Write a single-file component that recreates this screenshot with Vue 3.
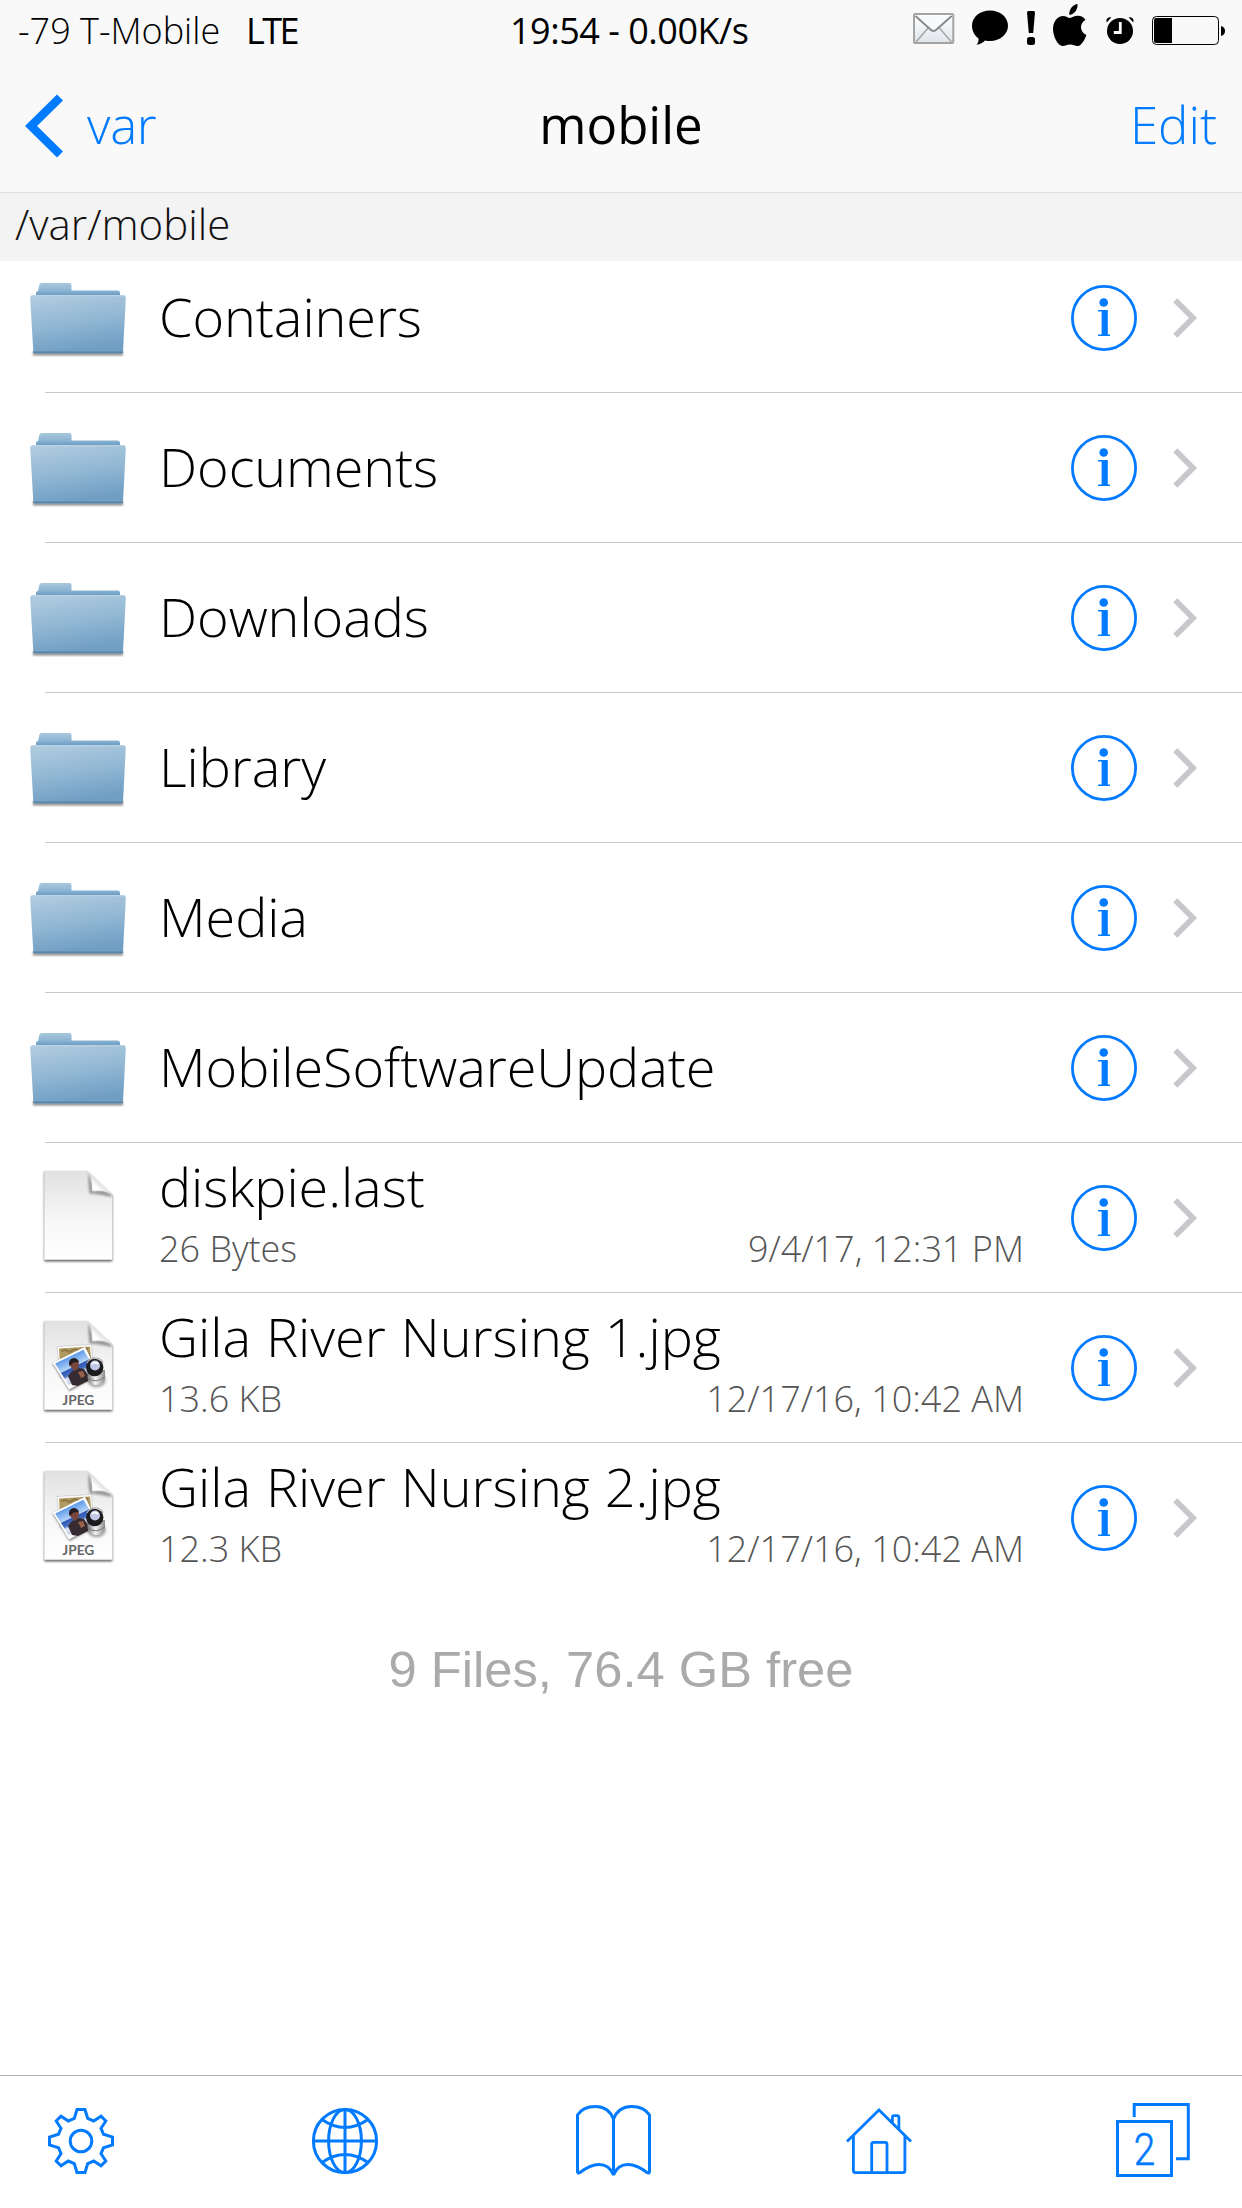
<script setup>
const entries = [
  { name: 'Containers', kind: 'folder' },
  { name: 'Documents', kind: 'folder' },
  { name: 'Downloads', kind: 'folder' },
  { name: 'Library', kind: 'folder' },
  { name: 'Media', kind: 'folder' },
  { name: 'MobileSoftwareUpdate', kind: 'folder' },
  { name: 'diskpie.last', kind: 'file', size: '26 Bytes', date: '9/4/17, 12:31 PM' },
  { name: 'Gila River Nursing 1.jpg', kind: 'jpeg', size: '13.6 KB', date: '12/17/16, 10:42 AM' },
  { name: 'Gila River Nursing 2.jpg', kind: 'jpeg', size: '12.3 KB', date: '12/17/16, 10:42 AM' },
]
</script>

<template>
  <div class="screen">
    <header class="header">
      <div class="status">
        <span class="carrier">-79 T-Mobile</span>
        <span class="network">LTE</span>
        <span class="clock">19:54 - 0.00K/s</span>
        <!-- mail, message, alert, apple, alarm, battery -->
        <svg class="indicators" width="314" height="48" viewBox="912 0 314 48">
          <defs>
            <linearGradient id="env" x1="0" y1="0" x2="0" y2="1">
              <stop offset="0" stop-color="#ffffff" /><stop offset="1" stop-color="#dfe5ea" />
            </linearGradient>
          </defs>
          <rect x="914" y="14" width="39.3" height="29" rx="1" fill="url(#env)" stroke="#a4a4a4" stroke-width="2" />
          <path d="M916 42 L928.500 27.500 M951.500 42 L939 27.500" stroke="#a4a7a9" stroke-width="1.500" fill="none" />
          <path d="M915.500 16 L930.500 29.500 Q933.500 32.500 936.500 29.500 L951.700 16 Z" fill="#f8f9fa" />
          <path d="M915.500 16 L930.500 29.500 Q933.500 32.500 936.500 29.500 L951.700 16" fill="none" stroke="#858889" stroke-width="1.800" />
          <path d="M990 10.500c10 0 18 6.600 18 15.200S1000 41 990 41c-1.800 0-3.500-.200-5-.600-2 2.200-5 4-8.500 4.400 1.600-1.800 2.200-3.800 2-6.400-4-2.800-6.500-7.500-6.500-12.700C972 17.100 980 10.500 990 10.500Z" />
          <path d="M1027 12.500q0-1.500 1.500-1.500h5q1.500 0 1.500 1.500l-1.800 20.500h-4.400Z" />
          <rect x="1027" y="37" width="8" height="8" rx="2.500" />
          <path d="M1069.300 15c-.5-5.500 3-10 8.200-11.300.5 5.500-3 10.500-8.200 11.300Z" />
          <path d="M1069.800 18c2-.2 4.500-2.400 8.200-2.300 3 .1 5.700 1.400 7.500 4-6.700 4-5.500 12.600.9 15.200-1.300 3.800-4.500 10.600-8.600 11.100-2.700.2-4.200-1.500-7.600-1.500s-5 1.600-7.600 1.500C1057.500 45.800 1053 36 1053 29c0-8 5-13 10-13.100 3.200 0 5 2 6.800 2.100Z" />
          <circle cx="1120" cy="31" r="13" />
          <path d="M1120.300 22v10.500h-6.500" fill="none" stroke="#f9f9f9" stroke-width="2.800" />
          <path d="M1106.800 22.500c-1.200-3.200.8-5.700 4.600-5.200ZM1133.200 22.500c1.200-3.200-.8-5.700-4.600-5.200Z" />
          <rect x="1152.500" y="16.500" width="66" height="28" rx="4" fill="none" stroke="#000" />
          <path d="M1156 18h16v25h-16q-2 0-2-2v-21q0-2 2-2Z" />
          <path d="M1221 26q4 1 4 5t-4 5Z" />
        </svg>
      </div>
      <nav class="nav">
        <a class="back">
          <svg width="38" height="64" viewBox="0 0 38 64"><path d="M35 3.500 6 32l29 28.500" fill="none" stroke="#007aff" stroke-width="8.500" /></svg>
          <span class="back-label">var</span>
        </a>
        <h1 class="title">mobile</h1>
        <a class="edit">Edit</a>
      </nav>
      <div class="path">/var/mobile</div>
    </header>

    <svg class="defs" width="0" height="0">
      <defs>
        <linearGradient id="front" x1="0" y1="0" x2=".25" y2="1">
          <stop offset="0" stop-color="#b3cde0" /><stop offset=".5" stop-color="#94b9d5" /><stop offset="1" stop-color="#719fc4" />
        </linearGradient>
        <linearGradient id="rear" x1="0" y1="0" x2="0" y2="1">
          <stop offset="0" stop-color="#a9c7dd" /><stop offset=".5" stop-color="#8fb6d4" /><stop offset="1" stop-color="#5f95bf" />
        </linearGradient>
        <linearGradient id="paper" x1="0" y1="0" x2="0" y2="1">
          <stop offset="0" stop-color="#e1e1e1" /><stop offset=".55" stop-color="#f7f7f7" /><stop offset="1" stop-color="#ffffff" />
        </linearGradient>
        <linearGradient id="curl" x1="0" y1="1" x2=".6" y2=".35">
          <stop offset="0" stop-color="#ffffff" /><stop offset=".55" stop-color="#ffffff" /><stop offset="1" stop-color="#c9c9c9" />
        </linearGradient>
        <linearGradient id="sky" x1="0" y1="0" x2="0" y2="1">
          <stop offset="0" stop-color="#5f9bea" /><stop offset=".42" stop-color="#b5d3f7" /><stop offset=".46" stop-color="#2d57b4" /><stop offset=".65" stop-color="#4a71c4" /><stop offset=".75" stop-color="#dfe6f4" /><stop offset="1" stop-color="#c3cfe6" />
        </linearGradient>
        <linearGradient id="steel" x1="0" y1="0" x2="1" y2="0">
          <stop offset="0" stop-color="#777" /><stop offset=".45" stop-color="#f4f4f4" /><stop offset="1" stop-color="#8c8c8c" />
        </linearGradient>
        <filter id="soft" x="-20%" y="-20%" width="140%" height="140%"><feGaussianBlur stdDeviation="1.100" /></filter>
      </defs>
    </svg>

    <ul class="list">
      <li v-for="e in entries" :key="e.name" class="row">
        <div class="thumb">
          <svg v-if="e.kind === 'folder'" class="folder" width="98" height="76" viewBox="-1 -1 98 76">
            <path d="M3 68h90v4.500h-90Z" fill="#55504e" opacity=".65" filter="url(#soft)" />
            <path d="M6 14V9.500q0-1.500 2-1.500l1.300-6q.4-2 2.400-2H39.500q2 0 2 2V7.500H87.500q2.500 0 2.500 2.500v4Z" fill="url(#rear)" />
            <path d="M2.500 12H93.500Q96 12.500 95.800 15.500L93 68.500Q93 70.500 91 70.500H5.300q-2 0-2-2L.2 15.500Q0 12.500 2.500 12Z" fill="url(#front)" />
            <path d="M1.500 12.700H94.500" stroke="#c5dae8" stroke-width="1" opacity=".7" />
            <path d="M3.300 69.200H93" stroke="#5585a8" stroke-width="1.500" />
          </svg>
          <svg v-else width="74" height="96" viewBox="0 0 74 96">
            <path d="M3.300 2H46L71.300 26V91.500H3.300Z" fill="#000" opacity=".6" filter="url(#soft)" />
            <path d="M3.300 1H46.500L71.300 24V89.800H3.300Z" fill="url(#paper)" />
            <path d="M47.500 3Q47 15 48.500 23.500 59 24 70.500 27L71 25Q61 18 52 22Q51 10 47 2Z" fill="#555" opacity=".55" filter="url(#soft)" />
            <path d="M46.500 1Q51.500 5 51.300 20.700 66 19.500 71.300 25.500L49 3Z" fill="url(#curl)" />
            <g v-if="e.kind === 'jpeg'">
              <path d="M16 26.500 50.500 24.500 53 56 19 58Z" fill="#fff" stroke="#bbb" stroke-width=".6" />
              <path d="M18 28.500 49 26.500 50 38 19 46Z" fill="#b09a60" />
              <path d="M20 31l5-1 3 2 6-3 5 2 4-3 4 1" fill="none" stroke="#766333" stroke-width="2" opacity=".6" />
              <path d="M11.700 43.700 44 27.700 58 55 28.500 71Z" fill="#000" opacity=".5" filter="url(#soft)" />
              <path d="M11.700 42.700 44 26.700 57.500 54 28 69.500Z" fill="#fff" />
              <g transform="matrix(30 -14.500 14.500 23.500 14.200 43.400)">
                <rect width="1" height="1" fill="url(#sky)" transform="scale(.94 .92)" />
              </g>
              <path d="M27 56l4-5 7-3 5 1 5 7-1 5-10 5-6-1Z" fill="#352b31" />
              <path d="M29 46q-1-6 3.500-7t5.500 3l-.5 6-4 3Z" fill="#774739" />
              <path d="M28.500 46q-2-7 4-8 4 0 5 4l-5 .500Z" fill="#221b20" />
              <path d="M37 52l5-1 2 5-4 2Z" fill="#9a614a" />
              <ellipse cx="55.500" cy="60" rx="9.500" ry="7.500" fill="#000" opacity=".3" filter="url(#soft)" />
              <path d="M46.500 50H64V58q-1 7-9 7t-8.500-7Z" fill="url(#steel)" />
              <path d="M47 58q8 6 16.500-1" fill="none" stroke="#777" stroke-width="1" />
              <circle cx="53.700" cy="47.500" r="8.700" fill="#1c1c1f" />
              <path d="M46 43q3-6 10-5 5 1 6 5" fill="none" stroke="#aaa" stroke-width="1.200" />
              <circle cx="54" cy="45.500" r="5" fill="#bfc8e4" />
              <path d="M51 44q3-3 6 0" fill="none" stroke="#fff" stroke-width="2" />
              <text x="37.300" y="84.500" text-anchor="middle" class="kind">JPEG</text>
            </g>
          </svg>
        </div>
        <div class="body" :class="{ single: !e.size }">
          <div class="name" :class="{ spaced: e.kind === 'jpeg' }">{{ e.name }}</div>
          <div v-if="e.size" class="meta"><span>{{ e.size }}</span><span class="date">{{ e.date }}</span></div>
        </div>
        <svg class="info" width="66" height="66" viewBox="0 0 66 66">
          <circle cx="33" cy="33" r="31.600" fill="none" stroke="#007aff" stroke-width="2.800" />
          <circle cx="32.700" cy="17.500" r="4.300" fill="#007aff" />
          <path d="M27 25.700H34.500M27 50.200H39" stroke="#007aff" stroke-width="1.400" />
          <path d="M33.700 25V51" stroke="#007aff" stroke-width="6.200" />
        </svg>
        <svg class="chevron" width="24" height="40" viewBox="0 0 24 40"><path d="M2.300 2.200 20 20 2.300 37.800" fill="none" stroke="#c7c7cc" stroke-width="5.800" /></svg>
      </li>
    </ul>

    <p class="summary">9 Files, 76.4 GB free</p>

    <footer class="toolbar">
      <svg width="66" height="66" viewBox="-33 -33 66 66" class="icon">
        <path d="M-4-31.500H4L6.700-22.500 12.700-20 20-24.800 24.800-20 20-12.700 22.500-6.700 31.500-4V4L22.500 6.700 20 12.700 24.800 20 20 24.800 12.700 20 6.700 22.500 4 31.500H-4L-6.700 22.500-12.700 20-20 24.800-24.800 20-20 12.700-22.500 6.700-31.500 4V-4L-22.500-6.700-20-12.700-24.800-20-20-24.800-12.700-20-6.700-22.500Z" />
        <circle r="10.800" />
      </svg>
      <svg width="66" height="66" viewBox="-33 -33 66 66" class="icon globe">
        <circle r="31.600" />
        <ellipse rx="16.400" ry="31.600" />
        <path d="M0-32V32M-32 0H32M-23-21.500Q0-5.500 23-21.500M-23 21.500Q0 5.500 23 21.500" />
      </svg>
      <svg width="75" height="72" viewBox="0 0 75 72" class="icon book">
        <path d="M37.500 70V14C34 5.500 28 1.500 19.500 1.500 12 1.500 5 4.500 1.500 10V66.500Q1.500 69 4 67.500C10 63 16 59.600 23 59.600 30 59.600 35 64 37.500 70Z" />
        <path d="M37.500 70V14C41 5.500 47 1.500 55.500 1.500 63 1.500 70 4.500 73.500 10V66.500Q73.500 69 71 67.500C65 63 59 59.600 52 59.600 45 59.600 40 64 37.500 70Z" />
      </svg>
      <svg width="66" height="66" viewBox="0 0 66 66" class="icon house">
        <path d="M1 33.500 33 2 65 33.500" />
        <path d="M7.400 28V62.500Q7.400 64.600 9.500 64.600H56.800Q58.900 64.600 58.900 62.500V28" />
        <path d="M25.700 64V36.300Q25.700 34.400 27.600 34.400H39.100Q41 34.400 41 36.300V64" />
        <path d="M46.400 14.500V9.500Q46.400 7.600 48.300 7.600H51Q52.900 7.600 52.900 9.500V21" />
      </svg>
      <svg width="74" height="76" viewBox="0 0 74 76" class="icon pages">
        <path d="M18.200 14V1.500H72.300V55.700H60" />
        <rect x="1.500" y="18.500" width="54" height="54" />
        <text class="count" transform="translate(28.600 62) scale(.88 1)" text-anchor="middle">2</text>
      </svg>
    </footer>
  </div>
</template>

<style>
body {
  margin: 0;
  background: #fff;
}
</style>

<style scoped>
.screen {
  display: flex;
  flex-direction: column;
  width: 1242px;
  height: 2208px;
  background: #fff;
  color: #000;
  font-family: "Open Sans", "Noto Sans", sans-serif;
  font-weight: 300;
  overflow: hidden;
}
.defs { display: block; flex: none; }
.header {
  position: relative;
  z-index: 1;
  flex: none;
  height: 261px;
  background: #f9f9f9;
}
.status {
  display: flex;
  height: 60px;
  padding-left: 18px;
  font-size: 36px;
  line-height: 62px;
  white-space: nowrap;
}
.carrier { width: 228px; }
.network { width: 264px; font-weight: 400; letter-spacing: -2.5px; }
.clock { width: 402px; font-weight: 400; letter-spacing: -.48px; }
.indicators { flex: none; }
.nav {
  display: grid;
  grid-template-columns: 1fr auto 1fr;
  align-items: center;
  height: 132px;
  padding: 0 25px;
  font-size: 51px;
  line-height: 128px;
  color: #007aff;
}
.back { display: flex; align-items: center; gap: 24px; }
.back-label, .title, .edit { height: 132px; }
.back-label { letter-spacing: -.3px; }
.title { margin: 0; font-size: 51px; font-weight: 400; color: #000; }
.edit { text-align: right; }
.path {
  height: 68px;
  border-top: 1px solid #e0e0e0;
  padding-left: 15px;
  background: #f3f3f3;
  color: #111;
  font-size: 42px;
  line-height: 62px;
}
.list {
  flex: none;
  list-style: none;
  margin: -18px 0 0;
  padding: 0;
}
.row {
  display: flex;
  align-items: center;
  height: 150px;
  padding-left: 29px;
  background: linear-gradient(#c8c7cc, #c8c7cc) 45px 149px / 100% 1px no-repeat;
}
.row:last-child { background: none; }
.thumb {
  display: flex;
  justify-content: center;
  width: 98px;
  margin-right: 32px;
}
.thumb svg { display: block; }
.folder { margin-top: 3px; }
.body {
  display: flex;
  flex-direction: column;
  gap: 13px;
  width: 865px;
  height: 124px;
}
.body.single { justify-content: center; height: 145px; padding-bottom: 5px; }
.name { font-size: 54px; line-height: 60px; letter-spacing: -.07px; white-space: nowrap; }
.spaced { letter-spacing: 0; word-spacing: .9px; }
.meta {
  display: flex;
  justify-content: space-between;
  color: #555;
  font-size: 36px;
  line-height: 40px;
}
.kind { font: 700 13.7px Lato, sans-serif; fill: #666; }
.info { margin-left: 47px; }
.chevron { margin-left: 36px; }
.summary {
  margin: 47px 0 0;
  text-align: center;
  color: #aaa;
  font: 400 50.7px/60px "Liberation Sans", Arial, sans-serif;
}
.toolbar {
  display: flex;
  align-items: center;
  box-sizing: border-box;
  height: 133px;
  margin-top: auto;
  border-top: 1px solid #b2b2b2;
  padding: 0 0 2px 48px;
}
.icon { flex: none; fill: none; stroke: #007aff; stroke-width: 3; overflow: visible; }
.globe, .book { margin-left: 198px; }
.house { margin-left: 195px; stroke-width: 2.8; }
.pages { margin-left: 204px; }
.count { font: 300 44px Roboto, sans-serif; fill: #007aff; stroke: #007aff; stroke-width: .6; }
</style>
